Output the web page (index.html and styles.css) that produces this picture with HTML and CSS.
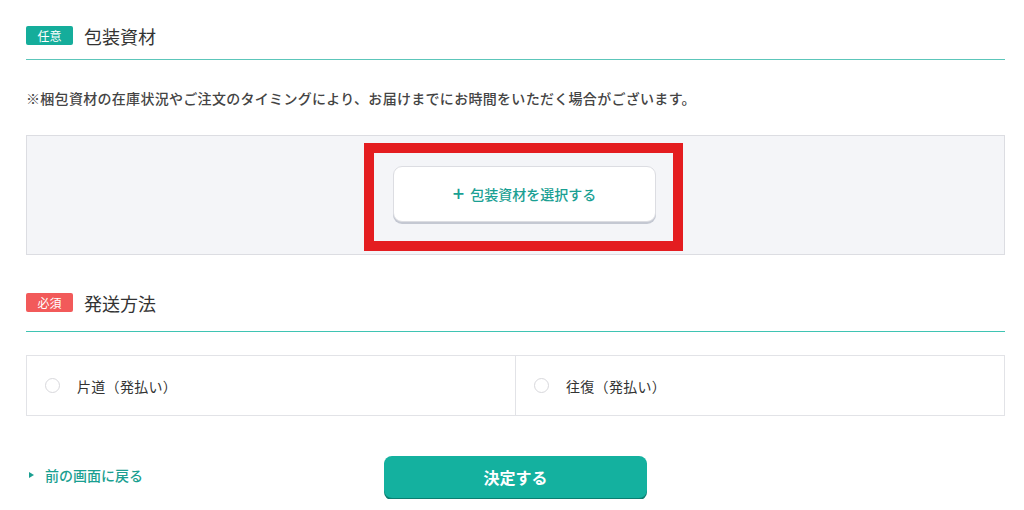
FILE: index.html
```html
<!DOCTYPE html>
<html lang="ja">
<head>
    <meta charset="UTF-8">
    <title>包装資材・発送方法</title>
    <link rel="stylesheet" href="styles.css">
</head>
<body>
    <div class="page">
        <div class="section-head">
            <span class="badge badge-optional">任意</span>
            <h2 class="section-title">包装資材</h2>
        </div>
        <p class="note">※梱包資材の在庫状況やご注文のタイミングにより、お届けまでにお時間をいただく場合がございます。</p>

        <div class="material-box">
            <button class="select-btn"><span class="plus">+</span>包装資材を選択する</button>
            <!-- 強調枠 -->
            <div class="highlight"></div>
        </div>

        <div class="section-head section-head-ship">
            <span class="badge badge-required">必須</span>
            <h2 class="section-title">発送方法</h2>
        </div>

        <div class="ship-options">
            <label class="ship-option">
                <span class="radio"></span>
                <span>片道（発払い）</span>
            </label>
            <label class="ship-option">
                <span class="radio"></span>
                <span>往復（発払い）</span>
            </label>
        </div>

        <div class="footer">
            <a class="back-link" href="#"><span class="arrow"></span>前の画面に戻る</a>
            <button class="submit-btn">決定する</button>
        </div>
    </div>
</body>
</html>
```

FILE: styles.css
```css
body {
    margin: 0;
    font-family: "Noto Sans CJK JP", "Noto Sans", sans-serif;
    color: #333;
    background: #fff;
}
.page {
    width: 979px;
    margin-left: 26px;
}
.section-head {
    display: flex;
    align-items: flex-start;
    gap: 11px;
    height: 33px;
    padding-top: 26px;
    box-sizing: content-box;
    border-bottom: 1px solid #5cc6ba;
}
.section-head-ship {
    height: 38px;
    padding-top: 0;
    margin-top: 38px;
    border-bottom-color: #3fc4b3;
}
.badge {
    display: inline-flex;
    align-items: center;
    justify-content: center;
    width: 47px;
    height: 19px;
    border-radius: 2px;
    color: #fff;
    font-size: 12px;
    line-height: 1;
}
.badge-optional {
    background: #15ad9b;
}
.badge-required {
    background: #f25a5a;
}
.section-title {
    margin: 0;
    font-size: 18px;
    font-weight: 400;
    line-height: 21px;
    color: #333;
}
.note {
    margin: 0;
    padding-top: 28px;
    height: 47px;
    font-size: 14px;
    font-weight: 500;
    letter-spacing: 0.3px;
    color: #444;
    line-height: 20px;
}
.material-box {
    position: relative;
    height: 120px;
    border: 1px solid #dcdde2;
    background: #f4f5f8;
    display: flex;
    justify-content: center;
    padding-top: 30px;
    box-sizing: border-box;
}
.select-btn {
    width: 263px;
    height: 56px;
    margin-left: 18px;
    border: 1px solid #dcdde2;
    border-radius: 9px;
    background: #fff;
    box-shadow: 0 2px 0 #c4c8d2;
    color: #1aa093;
    font-family: inherit;
    font-size: 14px;
    font-weight: 500;
    display: flex;
    align-items: center;
    justify-content: center;
    gap: 6px;
}
.plus {
    font-size: 20px;
    font-weight: 500;
    line-height: 1;
    margin-top: -2px;
}
.highlight {
    position: absolute;
    left: 337px;
    top: 7px;
    width: 319px;
    height: 108px;
    border: 10px solid #e41d20;
    box-sizing: border-box;
}
.ship-options {
    display: flex;
    margin-top: 23px;
    border: 1px solid #e2e3e7;
    height: 61px;
    box-sizing: border-box;
}
.ship-option {
    flex: 1;
    display: flex;
    align-items: center;
    gap: 17px;
    padding-left: 18px;
    font-size: 14px;
    font-weight: 400;
    letter-spacing: 0.3px;
    color: #333;
}
.ship-option + .ship-option {
    border-left: 1px solid #e2e3e7;
}
.radio {
    width: 13px;
    height: 13px;
    border: 1px solid #d8d8dc;
    border-radius: 50%;
    background: #fff;
}
.footer {
    display: flex;
    align-items: center;
    margin-top: 39px;
    height: 44px;
}
.back-link {
    display: flex;
    align-items: center;
    gap: 11px;
    width: 358px;
    box-sizing: border-box;
    padding-left: 3px;
    padding-bottom: 4px;
    color: #1a9f91;
    font-size: 14px;
    font-weight: 500;
    text-decoration: none;
}
.arrow {
    width: 0;
    height: 0;
    border-left: 5px solid #1a9f91;
    border-top: 3.5px solid transparent;
    border-bottom: 3.5px solid transparent;
}
.submit-btn {
    width: 263px;
    height: 42px;
    border: none;
    border-radius: 8px;
    background: #14b19f;
    box-shadow: 0 2px 0 #0b7d70;
    color: #fff;
    font-family: inherit;
    font-size: 16px;
    font-weight: 700;
}
```
